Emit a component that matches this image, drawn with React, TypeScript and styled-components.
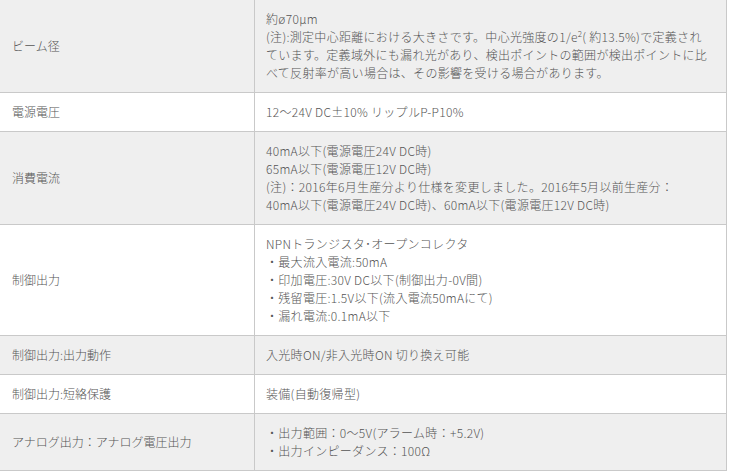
import React from 'react';
import styled, { createGlobalStyle } from 'styled-components';

type Spec = { label: string; lines: React.ReactNode[] };

const specs: Spec[] = [
	{
		label: 'ビーム径',
		lines: [
			'約ø70μm',
			<>(注):測定中心距離における大きさです。中心光強度の1/e<sup>2</sup>( 約13.5%)で定義され</>,
			'ています。定義域外にも漏れ光があり、検出ポイントの範囲が検出ポイントに比',
			'べて反射率が高い場合は、その影響を受ける場合があります。',
		],
	},
	{ label: '電源電圧', lines: ['12～24V DC±10% リップルP-P10%'] },
	{
		label: '消費電流',
		lines: [
			'40mA以下(電源電圧24V DC時)',
			'65mA以下(電源電圧12V DC時)',
			'(注)：2016年6月生産分より仕様を変更しました。2016年5月以前生産分：',
			'40mA以下(電源電圧24V DC時)、60mA以下(電源電圧12V DC時)',
		],
	},
	{
		label: '制御出力',
		lines: [
			'NPNトランジスタ･オープンコレクタ',
			'・最大流入電流:50mA',
			'・印加電圧:30V DC以下(制御出力-0V間)',
			'・残留電圧:1.5V以下(流入電流50mAにて)',
			'・漏れ電流:0.1mA以下',
		],
	},
	{ label: '制御出力:出力動作', lines: ['入光時ON/非入光時ON 切り換え可能'] },
	{ label: '制御出力:短絡保護', lines: ['装備(自動復帰型)'] },
	{
		label: 'アナログ出力：アナログ電圧出力',
		lines: ['・出力範囲：0～5V(アラーム時：+5.2V)', '・出力インピーダンス：100Ω'],
	},
];

export default function App() {
	return (
		<>
			<GlobalStyle />
			<Table>
				<tbody>
					{specs.map((spec, i) => (
						<Row key={spec.label} $shaded={i % 2 === 0} $first={i === 0}>
							<Label>{spec.label}</Label>
							<Value>
								{spec.lines.map((line, j) => (
									<Line key={j}>{line}</Line>
								))}
							</Value>
						</Row>
					))}
				</tbody>
			</Table>
		</>
	);
}

const GlobalStyle = createGlobalStyle`
  body {
    margin: 0;
    background: #fff;
    font-family: "Noto Sans CJK JP", "Noto Sans", sans-serif;
  }
`;

const Table = styled.table`
  width: 727px;
  border-collapse: collapse;
  table-layout: fixed;
  font-size: 12px;
  line-height: 18px;
  font-weight: 300;
  color: #555;
`;

const Row = styled.tr<{ $shaded: boolean; $first: boolean }>`
  background: ${({ $shaded }) => ($shaded ? '#efefef' : '#fff')};
  border-bottom: 1px solid #c9c9c9;

  & > * {
    padding-top: ${({ $first }) => ($first ? '13px' : '10px')};
  }
`;

const Label = styled.th`
  width: 230px;
  padding: 10px 12px;
  text-align: left;
  font-weight: inherit;
  vertical-align: middle;
  border-right: 1px solid #c9c9c9;
`;

const Value = styled.td`
  padding: 10px 11px;
  vertical-align: middle;
  border-right: 1px solid #c9c9c9;
`;

const Line = styled.div`
  white-space: nowrap;
  letter-spacing: 0.3px;

  sup {
    font-size: 8px;
    line-height: 0;
    vertical-align: 5px;
  }
`;
